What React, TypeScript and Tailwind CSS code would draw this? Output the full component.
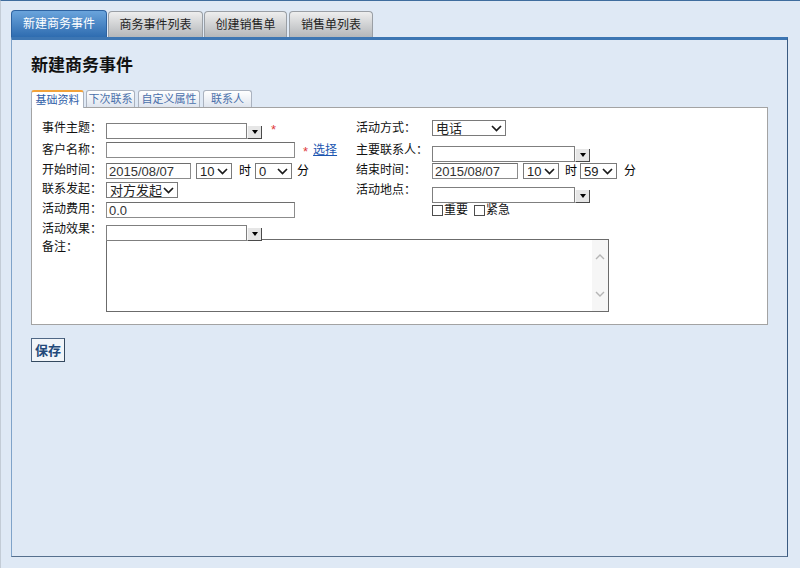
import React from "react";

const FONT = { fontFamily: '"Liberation Sans", "Noto Sans CJK SC", sans-serif' };

const Chevron = () => (
  <svg width="11" height="7" viewBox="0 0 11 7" className="shrink-0">
    <path d="M1 1 L5.5 5.5 L10 1" fill="none" stroke="#1a1a1a" strokeWidth="1.7" />
  </svg>
);

const Select = ({ w, value }: { w: string; value: string }) => (
  <div className={`${w} h-[16px] bg-white border border-[#7a7a7a] flex items-center justify-between pl-[3px] pr-[3px] text-[13px] leading-none text-[#222]`}>
    <span>{value}</span>
    <Chevron />
  </div>
);

const TextInput = ({ w, value }: { w: string; value?: string }) => (
  <div className={`${w} h-[16px] bg-white border border-[#8c8c8c] border-t-[#6e6e6e] flex items-center pl-[2px] text-[13px] leading-none text-[#333]`}>
    {value}
  </div>
);

const Combo = ({ w }: { w: string }) => (
  <div className="flex items-end">
    <div className={`${w} h-[16px] bg-white border border-[#7f7f7f]`} />
    <div className="w-[15px] h-[13px] bg-[#e6e6e6] border-r border-b border-[#4a4a4a] border-l border-l-[#f8f8f8] flex items-center justify-center">
      <div className="w-0 h-0 border-l-[3px] border-r-[3px] border-t-[4px] border-l-transparent border-r-transparent border-t-black" />
    </div>
  </div>
);

const Label = ({ text, w, mt }: { text: string; w: string; mt: string }) => (
  <div className={`${w} ${mt} text-[12px] leading-[16px] text-[#111] shrink-0 whitespace-nowrap`}>{text}</div>
);

const Star = () => <span className="block text-[#e03a3a] text-[13px] leading-[13px]">*</span>;

export default function App() {
  const topTabs = [
    { t: "商务事件列表", w: "w-[95px]", ml: "ml-[1px]" },
    { t: "创建销售单", w: "w-[83px]", ml: "ml-[1px]" },
    { t: "销售单列表", w: "w-[84px]", ml: "ml-[2px]" },
  ];
  const subTabs = [
    { t: "下次联系", w: "w-[49px]", ml: "ml-[2px]" },
    { t: "自定义属性", w: "w-[62px]", ml: "ml-[3px]" },
    { t: "联系人", w: "w-[49px]", ml: "ml-[3px]" },
  ];

  return (
    <div className="w-[800px] h-[568px] overflow-hidden bg-[#dfe9f5] border-t border-t-[#3f6d9e] border-l border-l-[#c3ccd6] pl-[10px] pr-[12px] pt-[9px]" style={FONT}>
      {/* top tabs */}
      <div className="flex items-end h-[27px]">
        <div className="w-[96px] h-[27px] rounded-t-[4px] bg-gradient-to-b from-[#6aa4dc] to-[#2e6cb0] border border-[#2d62a0] border-b-0 flex items-center justify-center text-white text-[12px]">
          新建商务事件
        </div>
        {topTabs.map((tab) => (
          <div
            key={tab.t}
            className={`${tab.w} ${tab.ml} h-[26px] rounded-t-[4px] bg-gradient-to-b from-[#eeeeee] to-[#b4b7ba] border border-[#9a9fa5] border-b-0 flex items-center justify-center text-[#1e1e1e] text-[12px]`}
          >
            {tab.t}
          </div>
        ))}
      </div>

      {/* main panel */}
      <div className="h-[520px] border-t-[3px] border-t-[#3d76b3] border-l border-l-[#7fa3c9] border-r border-r-[#3a5a80] border-b border-b-[#56708e] px-[19px]">
        <div className="pt-[16px] text-[17px] leading-[20px] font-bold text-[#111]">新建商务事件</div>

        {/* sub tabs */}
        <div className="mt-[13px] flex items-end h-[18px]">
          <div className="w-[53px] h-[18px] bg-white border border-[#aab2bf] border-t-2 border-t-[#f2a23a] border-b-0 rounded-t-[3px] flex items-center justify-center text-[11px] text-[#2f5ea8] relative z-10 -mb-px">
            基础资料
          </div>
          {subTabs.map((tab) => (
            <div
              key={tab.t}
              className={`${tab.w} ${tab.ml} h-[17px] bg-gradient-to-b from-[#ffffff] to-[#dfe5ee] border border-[#aab2bf] border-b-0 rounded-t-[3px] flex items-center justify-center text-[11px] text-[#4a70ab]`}
            >
              {tab.t}
            </div>
          ))}
        </div>

        {/* form */}
        <div className="h-[218px] bg-white border border-[#a3a3a3] pt-[11px] pl-[10px]">
          <div className="grid grid-cols-[314px_1fr]">
            {/* left column */}
            <div className="flex flex-col">
              <div className="flex h-[22px]">
                <Label text="事件主题：" w="w-[64px]" mt="mt-[1px]" />
                <div className="mt-[4px]"><Combo w="w-[141px]" /></div>
                <div className="ml-[9px] mt-[4px]"><Star /></div>
              </div>
              <div className="flex h-[20px]">
                <Label text="客户名称：" w="w-[64px]" mt="mt-[1px]" />
                <div className="mt-[1px]"><TextInput w="w-[189px]" /></div>
                <div className="ml-[8px] mt-[4px]"><Star /></div>
                <a className="ml-[5px] mt-[1px] text-[12px] leading-[16px] text-[#1a55b0] underline">选择</a>
              </div>
              <div className="flex h-[19px]">
                <Label text="开始时间：" w="w-[64px]" mt="mt-[1px]" />
                <div className="mt-[1px] flex items-center">
                  <TextInput w="w-[85px]" value="2015/08/07" />
                  <div className="ml-[5px]"><Select w="w-[36px]" value="10" /></div>
                  <span className="ml-[7px] text-[12px]">时</span>
                  <div className="ml-[4px]"><Select w="w-[37px]" value="0" /></div>
                  <span className="ml-[5px] text-[12px]">分</span>
                </div>
              </div>
              <div className="flex h-[20px]">
                <Label text="联系发起：" w="w-[64px]" mt="mt-[1px]" />
                <div className="mt-[2px]"><Select w="w-[72px]" value="对方发起" /></div>
              </div>
              <div className="flex h-[20px]">
                <Label text="活动费用：" w="w-[64px]" mt="mt-[1px]" />
                <div className="mt-[2px]"><TextInput w="w-[189px]" value="0.0" /></div>
              </div>
              <div className="flex h-[19px]">
                <Label text="活动效果：" w="w-[64px]" mt="mt-[1px]" />
                <div className="mt-[5px] relative z-10"><Combo w="w-[141px]" /></div>
              </div>
            </div>

            {/* right column */}
            <div className="flex flex-col">
              <div className="flex h-[22px]">
                <Label text="活动方式：" w="w-[76px]" mt="mt-[1px]" />
                <div className="mt-[1px]"><Select w="w-[74px]" value="电话" /></div>
              </div>
              <div className="flex h-[21px]">
                <Label text="主要联系人：" w="w-[76px]" mt="mt-[1px]" />
                <div className="mt-[5px]"><Combo w="w-[143px]" /></div>
              </div>
              <div className="flex h-[18px]">
                <Label text="结束时间：" w="w-[76px]" mt="mt-[0px]" />
                <div className="flex items-center">
                  <TextInput w="w-[86px]" value="2015/08/07" />
                  <div className="ml-[5px]"><Select w="w-[36px]" value="10" /></div>
                  <span className="ml-[6px] text-[12px]">时</span>
                  <div className="ml-[3px]"><Select w="w-[37px]" value="59" /></div>
                  <span className="ml-[7px] text-[12px]">分</span>
                </div>
              </div>
              <div className="flex">
                <Label text="活动地点：" w="w-[76px]" mt="mt-[2px]" />
                <div className="mt-[7px] flex flex-col">
                  <Combo w="w-[143px]" />
                  <div className="flex items-center h-[14px] text-[12px] leading-none text-[#111]">
                    <span className="w-[11px] h-[11px] border border-[#4d4d4d] bg-white" />
                    <span className="ml-[1px]">重要</span>
                    <span className="ml-[6px] w-[11px] h-[11px] border border-[#4d4d4d] bg-white" />
                    <span className="ml-[1px]">紧急</span>
                  </div>
                </div>
              </div>
            </div>
          </div>

          {/* remarks */}
          <div className="flex">
            <Label text="备注：" w="w-[64px]" mt="mt-[0px]" />
            <div className="w-[503px] h-[73px] bg-white border border-[#6b6b6b] flex justify-end">
              <div className="w-[16px] h-full bg-[#f6f6f6] flex flex-col items-center justify-between py-[14px]">
                <svg width="10" height="6" viewBox="0 0 10 6">
                  <path d="M1 5 L5 1 L9 5" fill="none" stroke="#b5b5b5" strokeWidth="1.4" />
                </svg>
                <svg width="10" height="6" viewBox="0 0 10 6">
                  <path d="M1 1 L5 5 L9 1" fill="none" stroke="#b5b5b5" strokeWidth="1.4" />
                </svg>
              </div>
            </div>
          </div>
        </div>

        {/* save */}
        <button className="mt-[13px] w-[34px] h-[24px] bg-[#f1f5f9] border border-[#4f6785] border-r-[#34495f] border-b-[#34495f] text-[13px] font-bold text-[#23497a] leading-none">
          保存
        </button>
      </div>
    </div>
  );
}
